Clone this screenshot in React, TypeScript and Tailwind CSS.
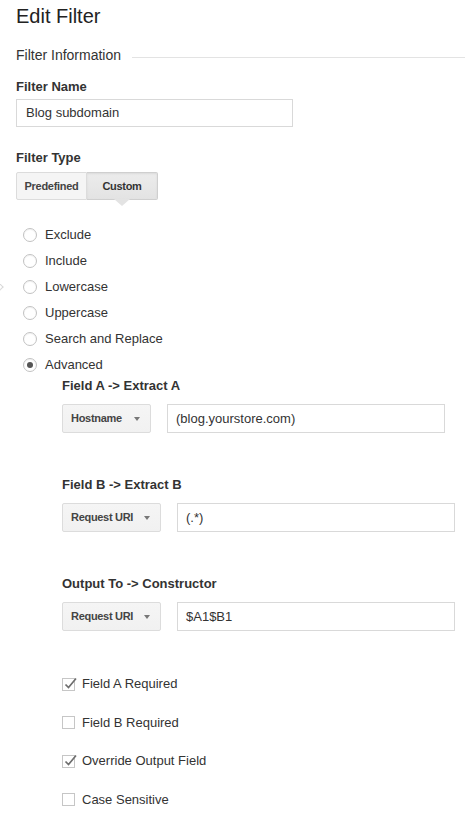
const FONT = "font-['Liberation_Sans',Arial,Helvetica,sans-serif]";

const radios = [
  { label: "Exclude", on: false },
  { label: "Include", on: false },
  { label: "Lowercase", on: false },
  { label: "Uppercase", on: false },
  { label: "Search and Replace", on: false },
  { label: "Advanced", on: true },
];

const checks = [
  { label: "Field A Required", on: true },
  { label: "Field B Required", on: false },
  { label: "Override Output Field", on: true },
  { label: "Case Sensitive", on: false },
];

type FieldProps = {
  label: string;
  select: string;
  selectW: string;
  value: string;
  inputW: string;
  top: string;
};

const FieldRow = ({ label, select, selectW, value, inputW, top }: FieldProps) => (
  <div className={top}>
    <div className="text-[13px] leading-[16px] font-bold text-[#333]">{label}</div>
    <div className="flex gap-[16px] mt-[10px]">
      <div
        className={`${selectW} h-[29px] flex items-center pl-[8px] pr-[10px] justify-between rounded-[2px] border border-[#dcdcdc] bg-gradient-to-b from-[#f5f5f5] to-[#f1f1f1]`}
      >
        <span className="text-[11px] font-bold text-[#444] tracking-[-0.3px]">{select}</span>
        <span className="w-0 h-0 border-l-[3px] border-r-[3px] border-t-[4px] border-l-transparent border-r-transparent border-t-[#777]" />
      </div>
      <div
        className={`${inputW} h-[29px] border border-[#d9d9d9] bg-white flex items-center pl-[8px] text-[13px] text-[#333]`}
      >
        {value}
      </div>
    </div>
  </div>
);

const CheckMark = () => (
  <svg width="14" height="14" viewBox="0 0 14 14" className="absolute left-[1px] top-[-2px]">
    <path d="M1.5 7.5 L4.5 10.5 L12 1.5" fill="none" stroke="#6e6e6e" strokeWidth="1.7" />
  </svg>
);

export default function App() {
  return (
    <div className={`relative w-[465px] h-[816px] overflow-hidden bg-white text-[#333] ${FONT}`}>
      {/* stray pointer at the left edge */}
      <div className="absolute left-[-6px] top-[283px] w-[8px] h-[8px] rotate-45 border-t border-r border-[#d8d8d8]" />

      <div className="pl-[16px]">
        <h1 className="pt-[4px] text-[20px] leading-[24px] font-normal text-[#222]">Edit Filter</h1>

        <div className="flex mt-[18px]">
          <span className="text-[14px] leading-[18px] text-[#333]">Filter Information</span>
          <div className="flex-1 h-px bg-[#e3e3e3] mt-[11px] ml-[11px]" />
        </div>

        <div className="mt-[15px] text-[13px] leading-[16px] font-bold text-[#333]">Filter Name</div>
        <div className="mt-[4px] w-[277px] h-[28px] border border-[#d9d9d9] flex items-center pl-[9px] text-[13px] text-[#333]">
          Blog subdomain
        </div>

        <div className="mt-[23px] text-[13px] leading-[16px] font-bold text-[#333]">Filter Type</div>
        <div className="mt-[6px] flex h-[28px]">
          <div className="w-[71px] flex items-center justify-center border border-[#dcdcdc] bg-[#f5f5f5] rounded-l-[2px] text-[11px] font-bold text-[#444] tracking-[-0.3px]">
            Predefined
          </div>
          <div className="relative w-[71px] flex items-center justify-center border border-l-0 border-[#cfcfcf] bg-gradient-to-b from-[#ececec] to-[#e3e3e3] rounded-r-[2px] text-[11px] font-bold text-[#333] tracking-[-0.3px] shadow-[inset_0_1px_2px_rgba(0,0,0,0.08)]">
            Custom
            <span className="absolute left-1/2 -translate-x-1/2 top-full w-0 h-0 border-l-[8px] border-r-[8px] border-t-[7px] border-l-transparent border-r-transparent border-t-[#e3e3e3]" />
          </div>
        </div>

        <div className="mt-[22px] pl-[7px]">
          {radios.map((r) => (
            <div key={r.label} className="h-[26px] flex items-center gap-[8px]">
              <span className="w-[14px] h-[14px] rounded-full border border-[#c2c2c2] bg-white shadow-[inset_0_1px_1px_rgba(0,0,0,0.06)] flex items-center justify-center">
                {r.on && <span className="w-[6px] h-[6px] rounded-full bg-[#555]" />}
              </span>
              <span className="text-[13px] text-[#333]">{r.label}</span>
            </div>
          ))}
        </div>

        <div className="pl-[46px]">
          <FieldRow
            top="mt-0"
            label="Field A -> Extract A"
            select="Hostname"
            selectW="w-[89px]"
            value="(blog.yourstore.com)"
            inputW="w-[278px]"
          />
          <FieldRow
            top="mt-[44px]"
            label="Field B -> Extract B"
            select="Request URI"
            selectW="w-[99px]"
            value="(.*)"
            inputW="w-[278px]"
          />
          <FieldRow
            top="mt-[44px]"
            label="Output To -> Constructor"
            select="Request URI"
            selectW="w-[99px]"
            value="$A1$B1"
            inputW="w-[278px]"
          />

          <div className="mt-[45px] flex flex-col gap-[22.5px]">
            {checks.map((c) => (
              <div key={c.label} className="h-[16px] flex items-center gap-[7px]">
                <span className="relative w-[13px] h-[13px] border border-[#c6c6c6] bg-white">
                  {c.on && <CheckMark />}
                </span>
                <span className="text-[13px] text-[#333]">{c.label}</span>
              </div>
            ))}
          </div>
        </div>
      </div>
    </div>
  );
}
